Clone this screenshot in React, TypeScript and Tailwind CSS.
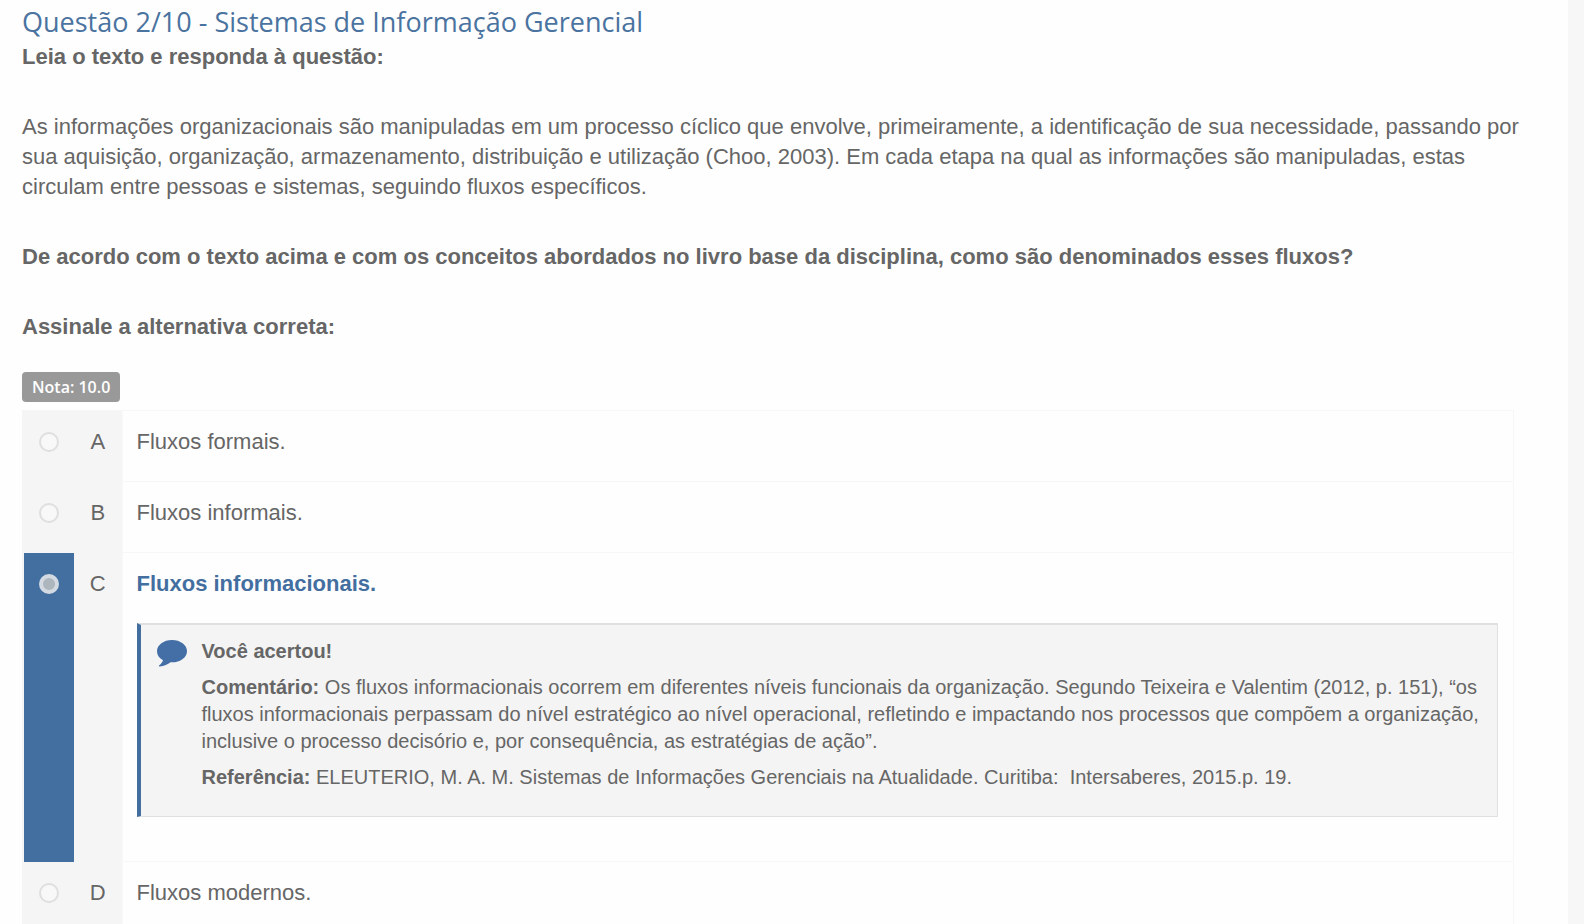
import type { ReactNode } from 'react'

interface AlternativeProps {
  letter: string
  label: string
  selected?: boolean
  children?: ReactNode
}

function Alternative({ letter, label, selected, children }: AlternativeProps) {
  const id = `alternativa-${letter.toLowerCase()}`

  return (
    <tr className="align-top">
      <td className={selected ? 'bg-[#436fa0] border-l-2 border-[#f5f5f5]' : 'bg-[#f5f5f5] border-l-2 border-[#f5f5f5]'}>
        <input
          type="radio"
          id={id}
          name="alternativa"
          defaultChecked={selected}
          className="block appearance-none size-5 mt-[21px] mx-auto rounded-full border-2 border-[#dfdfdf] bg-[#f8f8f8] checked:border-4 checked:border-[#d3dae2] checked:bg-[#adb5bd]"
        />
      </td>
      <td className="bg-[#f5f5f5] border-r border-[#f9f9f9] pt-4 text-center">{letter}</td>
      <td className="border-y border-[#f7f7f7] pt-4 pb-6 pl-[14px] pr-[15px]">
        <label htmlFor={id} className={selected ? 'block font-bold text-[#436fa0]' : 'block'}>
          {label}
        </label>
        {children}
      </td>
    </tr>
  )
}

function CommentIcon() {
  return (
    <svg viewBox="0 0 30 27" className="w-[30px] h-[27px] mt-0.5 shrink-0" fill="#436fa6" aria-hidden="true">
      <path d="M15 0C6.700 0 0 4.900 0 11.200c0 3.700 2.300 7 6 9.100C5.300 22.500 4 24 2.300 25.200c-.7.500-.4 1.400.5 1.300 4.400-.4 8-2 10.700-4.200 9.300.6 16.500-4.700 16.500-11.100C30 4.900 23.300 0 15 0z" />
    </svg>
  )
}

export default function App() {
  return (
    <div className="flex min-h-screen bg-[#f7f7f7] font-['Liberation_Sans',Arial,sans-serif] text-[22px] leading-[30px] text-[#666]">
      <main className="flex-1 mr-4 bg-[#fefefe] pl-[22px] pt-1.5">
        {/* Question statement */}
        <div className="pr-8">
          <h1 className="font-['Open_Sans',sans-serif] text-[27px] leading-8 text-[#4a73a0] mb-1">
            Questão 2/10 - Sistemas de Informação Gerencial
          </h1>
          <p className="font-bold mb-10">Leia o texto e responda à questão:</p>
          <p className="mb-10">
            As informações organizacionais são manipuladas em um processo cíclico que envolve, primeiramente, a
            identificação de sua necessidade, passando por sua aquisição, organização, armazenamento, distribuição e
            utilização (Choo, 2003). Em cada etapa na qual as informações são manipuladas, estas circulam entre pessoas
            e sistemas, seguindo fluxos específicos.
          </p>
          <p className="font-bold mb-10">
            De acordo com o texto acima e com os conceitos abordados no livro base da disciplina, como são denominados
            esses fluxos?
          </p>
          <p className="font-bold mb-[30px]">Assinale a alternativa correta:</p>
          <span className="block w-fit rounded-sm bg-[#999] px-[10px] font-['Open_Sans',sans-serif] text-[16px] font-semibold text-white mb-2">
            Nota: 10.0
          </span>
        </div>

        {/* Alternatives */}
        <div className="pr-[54px]">
          <table className="w-full table-fixed border-collapse border border-[#f7f7f7]">
            <colgroup>
              <col className="w-[51px]" />
              <col className="w-12" />
              <col />
            </colgroup>
            <tbody>
              <Alternative letter="A" label="Fluxos formais." />
              <Alternative letter="B" label="Fluxos informais." />
              <Alternative letter="C" label="Fluxos informacionais." selected>
                <div className="flex gap-[15px] mt-6 mb-5 border border-t-2 border-l-4 border-[#e0e0e0] border-l-[#436fa0] bg-[#f4f4f4] pt-[13px] pb-[25px] pl-4 pr-3 text-[20px] leading-[27px]">
                  <CommentIcon />
                  <div className="flex flex-col gap-[9px]">
                    <p className="font-bold">Você acertou!</p>
                    <p>
                      <strong>Comentário:</strong> Os fluxos informacionais ocorrem em diferentes níveis funcionais da
                      organização. Segundo Teixeira e Valentim (2012, p. 151), “os fluxos informacionais perpassam do
                      nível estratégico ao nível operacional, refletindo e impactando nos processos que compõem a
                      organização, inclusive o processo decisório e, por consequência, as estratégias de ação”.
                    </p>
                    <p>
                      <strong>Referência:</strong> ELEUTERIO, M. A. M. Sistemas de Informações Gerenciais na
                      Atualidade. Curitiba: &nbsp;Intersaberes, 2015.p. 19.
                    </p>
                  </div>
                </div>
              </Alternative>
              <Alternative letter="D" label="Fluxos modernos." />
            </tbody>
          </table>
        </div>
      </main>
    </div>
  )
}
